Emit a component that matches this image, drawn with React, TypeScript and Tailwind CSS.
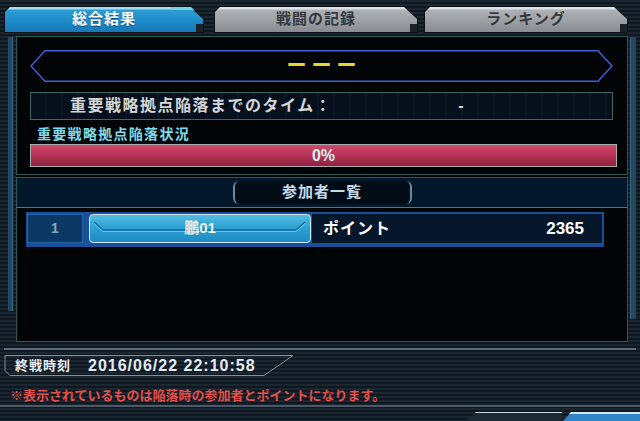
import React from 'react';

interface TabProps {
  label: string;
  active?: boolean;
  className?: string;
}

const Tab: React.FC<TabProps> = ({ label, active = false, className = '' }) => {
  return (
    <div className={`relative h-[27px] p-[1px] bg-[#0b1116] [clip-path:polygon(6px_0,calc(100%_-_14px)_0,100%_13px,100%_100%,0_100%,0_6px)] ${className}`}>
      <div
        className={`h-full flex items-center justify-center text-[15px] font-bold tracking-[1px] [clip-path:polygon(5px_0,calc(100%_-_13px)_0,100%_12px,100%_100%,0_100%,0_5px)] ${
          active
            ? 'bg-[linear-gradient(180deg,#a6def2_0px,#a6def2_2px,#2e9dd6_3px,#1c8ac8_60%,#1579b6_100%)] text-white [text-shadow:0_1px_1px_#0b4a78]'
            : 'bg-[linear-gradient(180deg,#dfe2e4_0px,#dfe2e4_2px,#aeb2b6_3px,#9a9ea3_60%,#888c91_100%)] text-[#35383c]'
        }`}
      >
        {label}
      </div>
      {active && <div className="absolute right-[9px] top-[1px] w-[24px] h-[3px] bg-[#6fd6e6]" />}
      <div className="absolute right-[1px] bottom-[1px] w-[7px] h-[8px] bg-[#1c2126]" />
    </div>
  );
};

export default function App() {
  return (
    <div className="w-[640px] h-[421px] overflow-hidden flex flex-col font-['Liberation_Sans','Noto_Sans_CJK_JP',sans-serif] bg-[repeating-linear-gradient(180deg,#1a2630_0px,#1a2630_2px,#0f1820_2px,#0f1820_4px)]">
      {/* tabs */}
      <div className="h-[34px] pt-[6px] pl-[4px] flex items-start">
        <Tab label="総合結果" active className="w-[200px]" />
        <Tab label="戦闘の記録" className="w-[204px] ml-[10px]" />
        <Tab label="ランキング" className="w-[204px] ml-[6px]" />
      </div>

      {/* main frame */}
      <div className="h-[310px] flex">
        <div className="w-[8px]" />
        <div className="w-[5px] mt-[3px] h-[274px] bg-[#244660] border-r border-[#3b6984]" />
        <div className="w-[3px]" />
        <div className="w-[612px] mt-[2px] h-[306px] flex flex-col bg-[#020405]">
          {/* upper box */}
          <div className="h-[139px] border border-[#2b5856] px-[13px] pt-[13px] flex flex-col">
            <div className="relative w-[583px] h-[32px] flex items-center justify-center">
              <svg className="absolute inset-0" width="583" height="32" viewBox="0 0 583 32">
                <polygon points="15,0.75 568,0.75 582,16 568,31.25 15,31.25 1,16" fill="none" stroke="#3f5fd2" strokeWidth="1.5" />
              </svg>
              <span className="relative text-[20px] font-bold text-[#e6d62c] tracking-[5px] pl-[5px]">ーーー</span>
            </div>
            <div className="mt-[10px] w-[583px] h-[28px] border border-[#3b6862] bg-[#06101d] bg-[repeating-linear-gradient(90deg,#06101d_0px,#06101d_14px,#0a1626_14px,#0a1626_16px)] flex items-center pl-[39px] text-[16px] font-bold text-[#d6d6d6]">
              <span className="w-[380px] tracking-[1.5px]">重要戦略拠点陥落までのタイム：</span>
              <span className="w-[22px] text-center">-</span>
            </div>
            <div className="mt-[4px] h-[20px] leading-[20px] pl-[7px] text-[14px] font-bold text-[#7fdcec] tracking-[1.3px]">
              重要戦略拠点陥落状況
            </div>
            <div className="w-[587px] h-[23px] border border-[#a9adb0] bg-[linear-gradient(180deg,#d04a6a_0%,#b83558_45%,#8e2040_100%)] flex items-center justify-center text-[16px] font-bold text-[#d8f4f4]">
              0%
            </div>
          </div>

          <div className="h-[2px]" />

          {/* participants header */}
          <div className="h-[31px] border-t border-x border-[#2b5856] border-b border-b-[#50777a] bg-[#03182a] flex items-center justify-center">
            <div className="w-[179px] h-[23px] bg-[#020c16] border-x-2 border-[#5d8ea6] rounded-[6px] flex items-center justify-center text-[15px] font-bold text-[#c4dcea] tracking-[1px]">
              参加者一覧
            </div>
          </div>

          {/* list */}
          <div className="flex-1 border-x border-b border-[#2b5856] pt-[4px]">
            <div className="ml-[9px] w-[578px] h-[35px] flex bg-[#1b4f97] pl-[1px] pt-[2px] pb-[4px] pr-[2px]">
              <div className="w-[56px] h-full bg-[#0c3963] border border-[#2466a8] flex items-center justify-center text-[14px] font-bold text-[#84aac4]">
                1
              </div>
              <div className="relative ml-[6px] w-[222px] h-full rounded-[4px] border-[1.5px] border-[#cde8f4] bg-[linear-gradient(180deg,#54bde4_0%,#2ea1d4_45%,#1f8cc4_100%)] flex items-center justify-center">
                <svg className="absolute inset-0" width="219" height="26" viewBox="0 0 219 26">
                  <polyline points="4,7 13,15 206,15 215,7" fill="none" stroke="#166a98" strokeWidth="1.4" />
                  <polyline points="4,8.5 13,16.5 206,16.5 215,8.5" fill="none" stroke="#7fd0ee" strokeWidth="0.8" />
                </svg>
                <span className="relative text-[15px] font-bold text-[#eef0d8]">鵬01</span>
              </div>
              <div className="ml-[1px] flex-1 h-full bg-[#07172b] flex items-center pl-[11px] pr-[18px] text-[16px] font-bold text-white">
                <span className="tracking-[1px]">ポイント</span>
                <span className="ml-auto text-[17px]">2365</span>
              </div>
            </div>
          </div>
        </div>
        <div className="w-[2px]" />
        <div className="w-[6px] mt-[3px] h-[282px] bg-[#244660] border-l border-[#3b6984]" />
      </div>

      {/* footer */}
      <div className="mt-[4px] ml-[4px] w-[632px] h-[2px] bg-[#5b6a7e]" />
      <div className="mt-[5px] ml-[4px] relative w-[290px] h-[21px] flex items-center">
        <svg className="absolute inset-0" width="290" height="21" viewBox="0 0 290 21">
          <polyline points="1,0.5 289,0.5 260,20.5 6,20.5 1,15.5 1,0.5" fill="none" stroke="#7e8fa6" strokeWidth="1" />
        </svg>
        <span className="relative ml-[11px] text-[13px] font-bold text-[#e6eef4] tracking-[1px]">終戦時刻</span>
        <span className="relative ml-[17px] text-[16px] font-bold text-[#e2ecf4] tracking-[1px]">2016/06/22 22:10:58</span>
      </div>
      <div className="mt-[12px] ml-[10px] h-[16px] leading-[16px] text-[13px] font-bold text-[#e2504c]">
        ※表示されているものは陥落時の参加者とポイントになります。
      </div>
      <div className="mt-[1px] h-[2px] bg-[#4d5865]" />
      <div className="mt-[5px] flex h-[9px]">
        <div className="ml-[466px] w-[96px] h-full bg-[#1d2a36] border-t border-[#c8d6e0] [clip-path:polygon(10px_0,100%_0,100%_100%,0_100%)]" />
        <div className="ml-[1px] flex-1 h-full bg-[#2f83c6] border-t-2 border-[#cfe6f4] [clip-path:polygon(8px_0,100%_0,100%_100%,0_100%)]" />
      </div>
    </div>
  );
}
